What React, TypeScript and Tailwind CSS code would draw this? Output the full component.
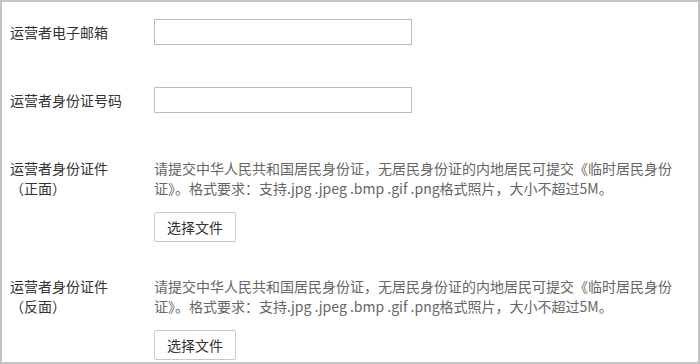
export default function App() {
  const font = { fontFamily: '"Microsoft YaHei", "Noto Sans CJK SC", "Noto Sans", sans-serif' };

  return (
    <div
      className="w-[700px] h-[364px] bg-white border-2 border-[#c4c4c4] pl-2 pt-[17px] text-[14px] overflow-hidden"
      style={font}
    >
      {/* email */}
      <div className="flex items-center h-[26px]">
        <div className="w-[144px] shrink-0 text-[#333]">运营者电子邮箱</div>
        <input type="text" className="w-[258px] h-[26px] border border-[#bdbdbd] bg-white outline-none" />
      </div>

      {/* id number */}
      <div className="flex items-center h-[26px] mt-[42px]">
        <div className="w-[144px] shrink-0 text-[#333]">运营者身份证号码</div>
        <input type="text" className="w-[258px] h-[26px] border border-[#bdbdbd] bg-white outline-none" />
      </div>

      <UploadRow side="正面" className="mt-[45px]" />
      <UploadRow side="反面" className="mt-[34px]" />
    </div>
  );
}

function UploadRow({ side, className }: { side: string; className: string }) {
  return (
    <div className={`flex ${className}`}>
      <div className="w-[144px] shrink-0 text-[#333] leading-[20px]">
        <div>运营者身份证件</div>
        <div>（{side}）</div>
      </div>
      <div>
        <div className="text-[#666] leading-[20px] whitespace-nowrap">
          <div>请提交中华人民共和国居民身份证，无居民身份证的内地居民可提交《临时居民身份</div>
          <div>证》。格式要求：支持.jpg .jpeg .bmp .gif .png格式照片，大小不超过5M。</div>
        </div>
        <button className="mt-[14px] w-[82px] h-[30px] border border-[#c8c8c8] rounded-[2px] bg-white text-[#333] text-[14px]">
          选择文件
        </button>
      </div>
    </div>
  );
}
